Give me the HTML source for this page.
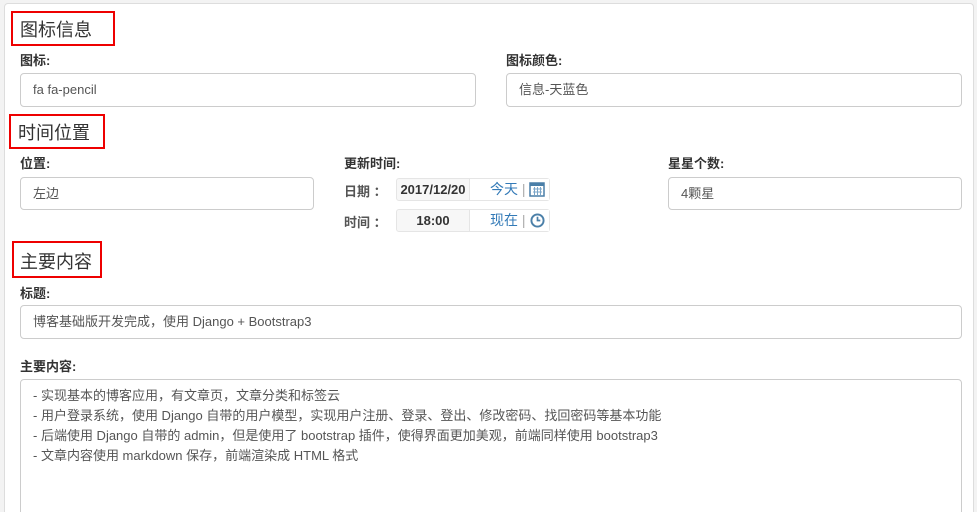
<!DOCTYPE html>
<html style="overflow:hidden;height:512px"><head><meta charset="utf-8"><style>
body{margin:0;width:977px;height:512px;overflow:hidden;background:#f3f3f3;font-family:"Liberation Sans","Noto Sans CJK SC",sans-serif;color:#333;font-size:13px;position:relative}
.card{position:absolute;left:4px;top:3px;width:968px;height:520px;background:#fff;border:1px solid #ddd;border-radius:4px}
.a{position:absolute}
.red{position:absolute;border:2px solid #e00;box-sizing:border-box}
.h{position:absolute;font-size:18px;color:#333}
.lb{position:absolute;font-weight:bold;font-size:13px}
.in{position:absolute;border:1px solid #ccc;border-radius:4px;box-sizing:border-box;font-size:13px;color:#555;padding-left:12px;background:#fff}
.grp{position:absolute;border:1px solid #e5e5e5;border-radius:3px;box-sizing:border-box;background:#f7f7f7;height:23px}
.grp b{position:absolute;left:0;width:72px;text-align:center;line-height:21px;color:#333}
.grp span{position:absolute;left:72px;top:0;height:21px;width:80px;background:#fff;border-left:1px solid #e5e5e5;color:#337ab7;line-height:21px;padding-left:20px;box-sizing:border-box;font-size:14px}
.ta div{line-height:20px}
</style></head><body>
<div class="card"></div>
<div class="red" style="left:11px;top:11px;width:104px;height:35px"></div>
<div class="h" style="left:20px;top:16px">图标信息</div>
<div class="lb" style="left:20px;top:50px">图标:</div>
<div class="in" style="left:20px;top:73px;width:456px;height:34px;line-height:32px">fa fa-pencil</div>
<div class="lb" style="left:506px;top:50px">图标颜色:</div>
<div class="in" style="left:506px;top:73px;width:456px;height:34px;line-height:32px">信息-天蓝色</div>

<div class="red" style="left:9px;top:114px;width:96px;height:35px"></div>
<div class="h" style="left:18px;top:119px">时间位置</div>
<div class="lb" style="left:20px;top:153px">位置:</div>
<div class="in" style="left:20px;top:177px;width:294px;height:33px;line-height:31px">左边</div>
<div class="lb" style="left:344px;top:153px">更新时间:</div>
<div class="a" style="left:344px;top:181px;color:#555;font-weight:bold">日期 ：</div>
<div class="grp" style="left:396px;top:178px;width:154px"><b>2017/12/20</b><span>今天 <span style="position:static;border:0;color:#aaa;padding:0">|</span></span></div>
<svg class="a" style="left:529px;top:181px" width="16" height="16" viewBox="0 0 16 16"><rect x="1" y="2" width="14" height="13" fill="#fff" stroke="#4a7fa8" stroke-width="1.5"/><rect x="1" y="2" width="14" height="3" fill="#4a7fa8"/><path d="M4 8h9M4 11h9M5.5 6v8M8.5 6v8M11.5 6v8" stroke="#7aa5c8" stroke-width="1"/></svg>
<div class="a" style="left:344px;top:212px;color:#555;font-weight:bold">时间 ：</div>
<div class="grp" style="left:396px;top:209px;width:154px"><b>18:00</b><span>现在 <span style="position:static;border:0;color:#aaa;padding:0">|</span></span></div>
<svg class="a" style="left:530px;top:213px" width="15" height="15" viewBox="0 0 16 16"><circle cx="8" cy="8" r="6.5" fill="none" stroke="#4a7fa8" stroke-width="2"/><path d="M8 4v4h3" stroke="#4a7fa8" stroke-width="1.8" fill="none"/></svg>
<div class="lb" style="left:668px;top:153px">星星个数:</div>
<div class="in" style="left:668px;top:177px;width:294px;height:33px;line-height:31px">4颗星</div>

<div class="red" style="left:12px;top:241px;width:90px;height:37px"></div>
<div class="h" style="left:20px;top:248px">主要内容</div>
<div class="lb" style="left:20px;top:283px">标题:</div>
<div class="in" style="left:20px;top:305px;width:942px;height:34px;line-height:32px">博客基础版开发完成，使用 Django + Bootstrap3</div>
<div class="lb" style="left:20px;top:356px">主要内容:</div>
<div class="in ta" style="left:20px;top:379px;width:942px;height:140px;padding-top:6px">
<div>- 实现基本的博客应用，有文章页，文章分类和标签云</div>
<div>- 用户登录系统，使用 Django 自带的用户模型，实现用户注册、登录、登出、修改密码、找回密码等基本功能</div>
<div>- 后端使用 Django 自带的 admin，但是使用了 bootstrap 插件，使得界面更加美观，前端同样使用 bootstrap3</div>
<div>- 文章内容使用 markdown 保存，前端渲染成 HTML 格式</div>
</div>
</body></html>
